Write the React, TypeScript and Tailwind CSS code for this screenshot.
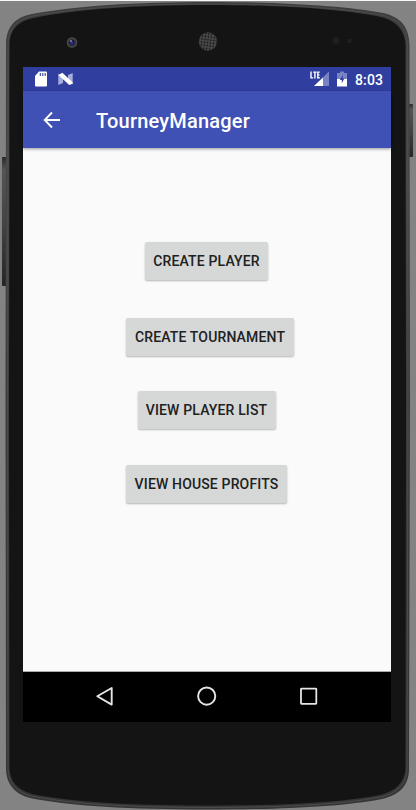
import React from "react";

function PhoneBody() {
  return (
    <svg className="absolute inset-0" width="416" height="810" viewBox="0 0 416 810" fill="none" aria-hidden="true">
      <defs>
        <linearGradient id="rim" x1="0" y1="0" x2="0" y2="810" gradientUnits="userSpaceOnUse">
          <stop offset="0" stopColor="#3c3c3d" />
          <stop offset="0.2" stopColor="#464749" />
          <stop offset="0.5" stopColor="#3b3b3c" />
          <stop offset="1" stopColor="#353535" />
        </linearGradient>
        <linearGradient id="key" x1="0" y1="0" x2="0" y2="1">
          <stop offset="0" stopColor="#292929" />
          <stop offset="0.1" stopColor="#555" />
          <stop offset="0.5" stopColor="#444" />
          <stop offset="1" stopColor="#252525" />
        </linearGradient>
        <radialGradient id="lens">
          <stop offset="0" stopColor="#2828a0" />
          <stop offset="0.35" stopColor="#17173f" />
          <stop offset="0.6" stopColor="#343437" />
          <stop offset="0.85" stopColor="#4c4c4d" />
          <stop offset="1" stopColor="#202020" />
        </radialGradient>
        <pattern id="mesh" width="3" height="3" patternUnits="userSpaceOnUse" patternTransform="rotate(8)">
          <rect width="3" height="3" fill="#585858" />
          <circle cx="1.5" cy="1.5" r="1.15" fill="#181818" />
        </pattern>
      </defs>
      <rect width="416" height="1" fill="#f7f7f7" />
      <rect x="2" y="157" width="5" height="129" rx="1" fill="url(#key)" />
      <rect x="408" y="104" width="5" height="53" rx="1" fill="url(#key)" />
      <path
        d="M5.5 400 L6 45 C6 27 15 17 32 14 C75 6 135 2 208 2 C281 2 345 6 383 13 C401 17 409 27 409.5 45 L410 400 L409 769 C409 786 399 795 382 799 C340 807 280 809.5 208 809.5 C130 809.5 70 806 30 798 C14 794 6 783 6 769 Z"
        fill="url(#rim)"
      />
      <path
        d="M7.5 400 L8 45 C8 29 16 19 33 16 C76 8 135 4 208 4 C281 4 344 8 382 15 C399 19 407 29 407.5 45 L408 400 L407 768 C407 784 397 793 381 797 C339 805 280 807.5 208 807.5 C130 807.5 71 804 31 796 C16 792 8 782 8 768 Z"
        stroke="#515153"
        strokeWidth=".8"
      />
      <path
        d="M9 400 L9.5 45 C9.5 31 17 21 34 18 C77 9 136 5 208 5 C280 5 343 9 381 17 C397 21 405 31 405.5 45 L406 400 L405.5 768 C405 782 396 791 380 795 C338 803 280 805.5 208 805.5 C130 805.5 72 802 32 794 C18 790 9.5 781 9.5 768 Z"
        fill="#141414"
      />
      <circle cx="72" cy="42.5" r="5.6" fill="url(#lens)" />
      <circle cx="71" cy="41" r="1" fill="#8e8e9a" />
      <circle cx="72" cy="43" r="1.2" fill="#3030b0" />
      <circle cx="208" cy="41.5" r="9.3" fill="url(#mesh)" />
      <circle cx="336" cy="41" r="4" fill="#1c1c1c" />
      <circle cx="336" cy="41" r="2" fill="#222" />
      <circle cx="349.5" cy="41" r="2.3" fill="#202020" />
    </svg>
  );
}

function StatusBar() {
  return (
    <div className="flex h-6 items-center bg-[#303f9f] pl-3 pr-2 text-white">
      <svg className="shrink-0" width="12" height="16" viewBox="0 0 12 16" aria-hidden="true">
        <path d="M4 .5h7q1 0 1 1v13q0 1-1 1H1q-1 0-1-1V5z" fill="#fff" />
        <path d="M5.3 2v3M7.8 2v3M10.2 2v3" stroke="#303f9f" strokeWidth="1.1" />
      </svg>
      <svg className="ml-[11px] shrink-0" width="15" height="14" viewBox="0 0 15 14" aria-hidden="true">
        <path d="M.3 1.6L5 5v6L.3 13zM14.7 1L10 3v6l4.7 3z" fill="#a5addc" />
        <path d="M.5 3L4.3 .8 14.6 10.2v1.6L11.2 13z" fill="#fff" />
      </svg>
      <svg className="ml-auto shrink-0" width="19" height="16" viewBox="0 0 19 16" aria-hidden="true">
        <path d="M19 .5V15H4z" fill="#7984c4" />
        <path d="M13 6.6V15H4z" fill="#fff" />
        <path d="M1 .5v6.4h2.2M3.2 1.1h3.4M4.9 1.1v6.3M9.7 1.1H7.8v5.7h1.9M7.8 3.9h1.7" stroke="#fff" strokeWidth="1.4" fill="none" />
      </svg>
      <svg className="ml-2 shrink-0" width="10" height="16" viewBox="0 0 10 16" aria-hidden="true">
        <path d="M3 .5h4V2h3v6H0V2h3z" fill="#7984c4" />
        <path d="M0 8h10v7.5H0z" fill="#fff" />
        <path d="M6 4L2.8 9h2v3.2L7.3 7.6H5.7z" fill="#303f9f" />
      </svg>
      <span className="ml-2 w-7 whitespace-nowrap pt-px text-[14px] font-medium leading-6 tracking-[0.15px]">8:03</span>
    </div>
  );
}

function MenuButton({ className, children }: { className: string; children: React.ReactNode }) {
  return (
    <button
      className={`${className} flex h-[38px] items-center justify-center whitespace-nowrap rounded-[2px] bg-[#d6d8d7] pt-px text-[14px] font-medium tracking-[0.15px] text-[#202121] shadow-[0_1px_2px_rgba(0,0,0,0.28)]`}
    >
      {children}
    </button>
  );
}

function NavigationBar() {
  return (
    <nav className="flex h-[50px] items-center bg-black pl-[72px]">
      <button aria-label="Back">
        <svg width="20" height="22" viewBox="0 0 20 22" fill="none">
          <path d="M16.7 2v16.6L2.3 10.3z" stroke="#e5e5e5" strokeWidth="1.9" strokeLinejoin="round" />
        </svg>
      </button>
      <button aria-label="Home" className="ml-[81px]">
        <svg width="22" height="22" viewBox="0 0 22 22" fill="none">
          <circle cx="10.7" cy="10.1" r="8.6" stroke="#e5e5e5" strokeWidth="1.9" />
        </svg>
      </button>
      <button aria-label="Recent apps" className="ml-[81px]">
        <svg width="20" height="22" viewBox="0 0 20 22" fill="none">
          <rect x="2" y="2.6" width="15.3" height="15.2" rx=".5" stroke="#e5e5e5" strokeWidth="1.8" />
        </svg>
      </button>
    </nav>
  );
}

export default function App() {
  return (
    <div className="relative h-[810px] w-[416px] overflow-hidden bg-[#838383] pl-[23px] pt-[67px] font-[Roboto,sans-serif]">
      <PhoneBody />
      <main className="relative flex h-[655px] w-[368px] flex-col bg-[#fafafa]">
        <StatusBar />
        <header className="relative flex h-[57px] items-center bg-[#3f51b5] pl-5 text-white shadow-[0_1px_3px_rgba(0,0,0,0.4)]">
          <button aria-label="Navigate up">
            <svg width="18" height="18" viewBox="0 0 18 18" fill="none">
              <path d="M17 9H2M9 1.5L1.7 9 9 16.5" stroke="#fff" strokeWidth="1.8" />
            </svg>
          </button>
          <h1 className="ml-[35px] pt-0.5 text-[20px] font-medium tracking-[0.2px]">TourneyManager</h1>
        </header>
        <section className="flex flex-1 flex-col items-start border-b border-[#aaa] pt-[94px]">
          <MenuButton className="ml-[122px] w-[123px]">CREATE PLAYER</MenuButton>
          <MenuButton className="ml-[103px] mt-[38px] w-[168px]">CREATE TOURNAMENT</MenuButton>
          <MenuButton className="ml-[114.5px] mt-[35px] w-[138px]">VIEW PLAYER LIST</MenuButton>
          <MenuButton className="ml-[103px] mt-9 w-[161px]">VIEW HOUSE PROFITS</MenuButton>
        </section>
        <NavigationBar />
      </main>
    </div>
  );
}
